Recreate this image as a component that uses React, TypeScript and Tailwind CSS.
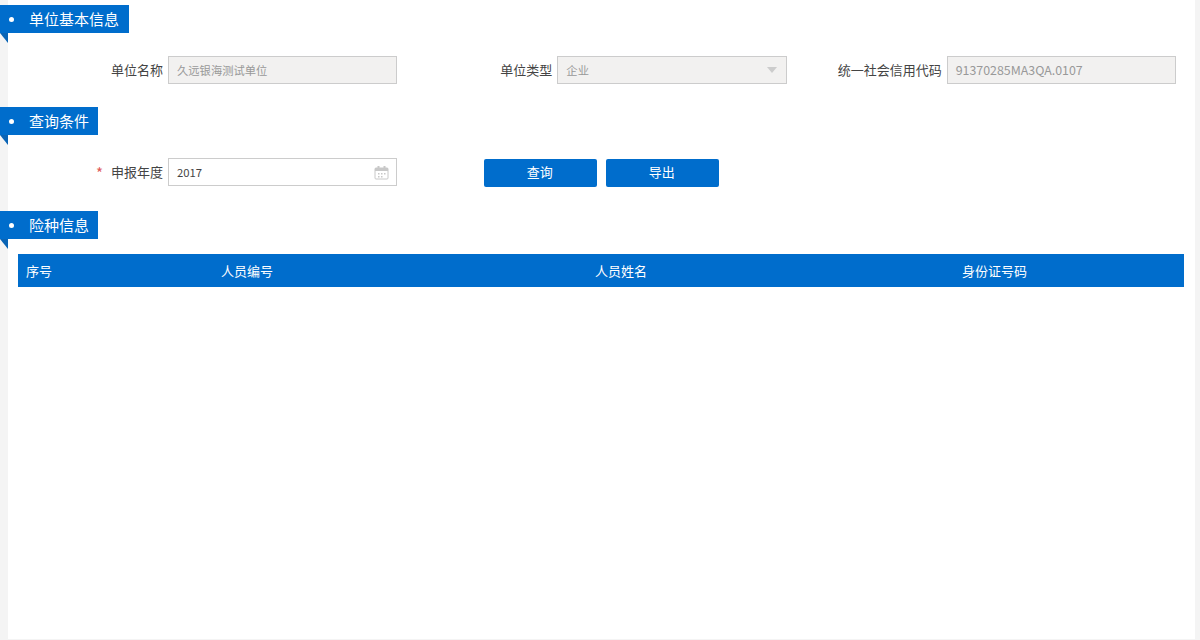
const font = '[font-family:"Noto_Sans_CJK_SC","Noto_Sans",sans-serif]'

const SectionTag = ({ title, width }: { title: string; width: string }) => (
  <div className={`relative -ml-2 flex h-7 items-center bg-[#006dcc] text-[15px] text-white ${width}`}>
    <span className="ml-[9px] mr-[15px] h-[5px] w-[5px] rounded-full bg-white" />
    {title}
    <span className="absolute left-0 top-full h-0 w-0 border-l-[8px] border-t-[10px] border-l-transparent border-t-[#0a64b5]" />
  </div>
)

const Field = ({
  label,
  required = false,
  disabled = true,
  children,
}: {
  label: string
  required?: boolean
  disabled?: boolean
  children: React.ReactNode
}) => (
  <div className="flex items-center">
    <div className="flex w-[155px] items-center justify-end text-[13px] text-[#444]">
      {required && <span className="mr-2 text-[15px] leading-none text-[#e05a5a]">*</span>}
      {label}
    </div>
    <div
      className={`ml-[5px] flex h-7 flex-1 items-center justify-between border border-[#ccc] pl-2 pr-[9px] text-[11.3px] ${
        disabled ? 'bg-[#f2f1f0] text-[#999]' : 'bg-white text-[#444]'
      }`}
    >
      {children}
    </div>
  </div>
)

const CalendarIcon = () => (
  <svg width="15" height="15" viewBox="0 0 15 15" fill="none" className="-mr-[2px]">
    <rect x="1" y="3" width="13" height="11" rx="1" stroke="#c8c8c8" />
    <rect x="1" y="3" width="13" height="3" fill="#c8c8c8" />
    <rect x="3.5" y="1" width="2" height="3.5" fill="#c8c8c8" />
    <rect x="9.5" y="1" width="2" height="3.5" fill="#c8c8c8" />
    <rect x="4" y="8" width="1.5" height="1.5" fill="#c8c8c8" />
    <rect x="7" y="8" width="1.5" height="1.5" fill="#c8c8c8" />
    <rect x="10" y="8" width="1.5" height="1.5" fill="#c8c8c8" />
    <rect x="4" y="11" width="1.5" height="1.5" fill="#c8c8c8" />
    <rect x="7" y="11" width="1.5" height="1.5" fill="#c8c8c8" />
  </svg>
)

const ActionButton = ({ label }: { label: string }) => (
  <button type="button" className="h-7 w-[113px] rounded-[2px] bg-[#006dcc] pb-[2px] pr-[2px] text-[13px] text-white">
    {label}
  </button>
)

export default function App() {
  return (
    <div className={`h-[640px] overflow-hidden bg-[#f4f4f4] pl-2 pr-[5px] ${font}`}>
      <div className="h-[639px] bg-white pt-[5px]">
        <SectionTag title="单位基本信息" width="w-[129px]" />
        <div className="mt-[23px] grid w-[1168px] grid-cols-3">
          <Field label="单位名称">久远银海测试单位</Field>
          <Field label="单位类型">
            企业
            <span className="h-0 w-0 border-x-[5px] border-t-[6px] border-x-transparent border-t-[#ccc]" />
          </Field>
          <Field label="统一社会信用代码">
            <span className="text-[12.4px]">91370285MA3QA.0107</span>
          </Field>
        </div>

        <div className="mt-[23px]">
          <SectionTag title="查询条件" width="w-[98px]" />
        </div>
        <div className="mt-[23px] grid w-[1168px] grid-cols-3 items-start">
          <Field label="申报年度" required disabled={false}>
            2017
            <CalendarIcon />
          </Field>
          <div className="mt-px flex gap-[9px] pl-[87px]">
            <ActionButton label="查询" />
            <ActionButton label="导出" />
          </div>
        </div>

        <div className="mt-[24px]">
          <SectionTag title="险种信息" width="w-[98px]" />
        </div>
        <div className="ml-[10px] mr-[11px] mt-[15px] grid h-[33px] grid-cols-[195px_374px_367px_1fr] items-center bg-[#006dcc] text-[13px] text-white">
          <div className="pl-2">序号</div>
          <div className="pl-2">人员编号</div>
          <div className="pl-2">人员姓名</div>
          <div className="pl-2">身份证号码</div>
        </div>
      </div>
    </div>
  )
}
